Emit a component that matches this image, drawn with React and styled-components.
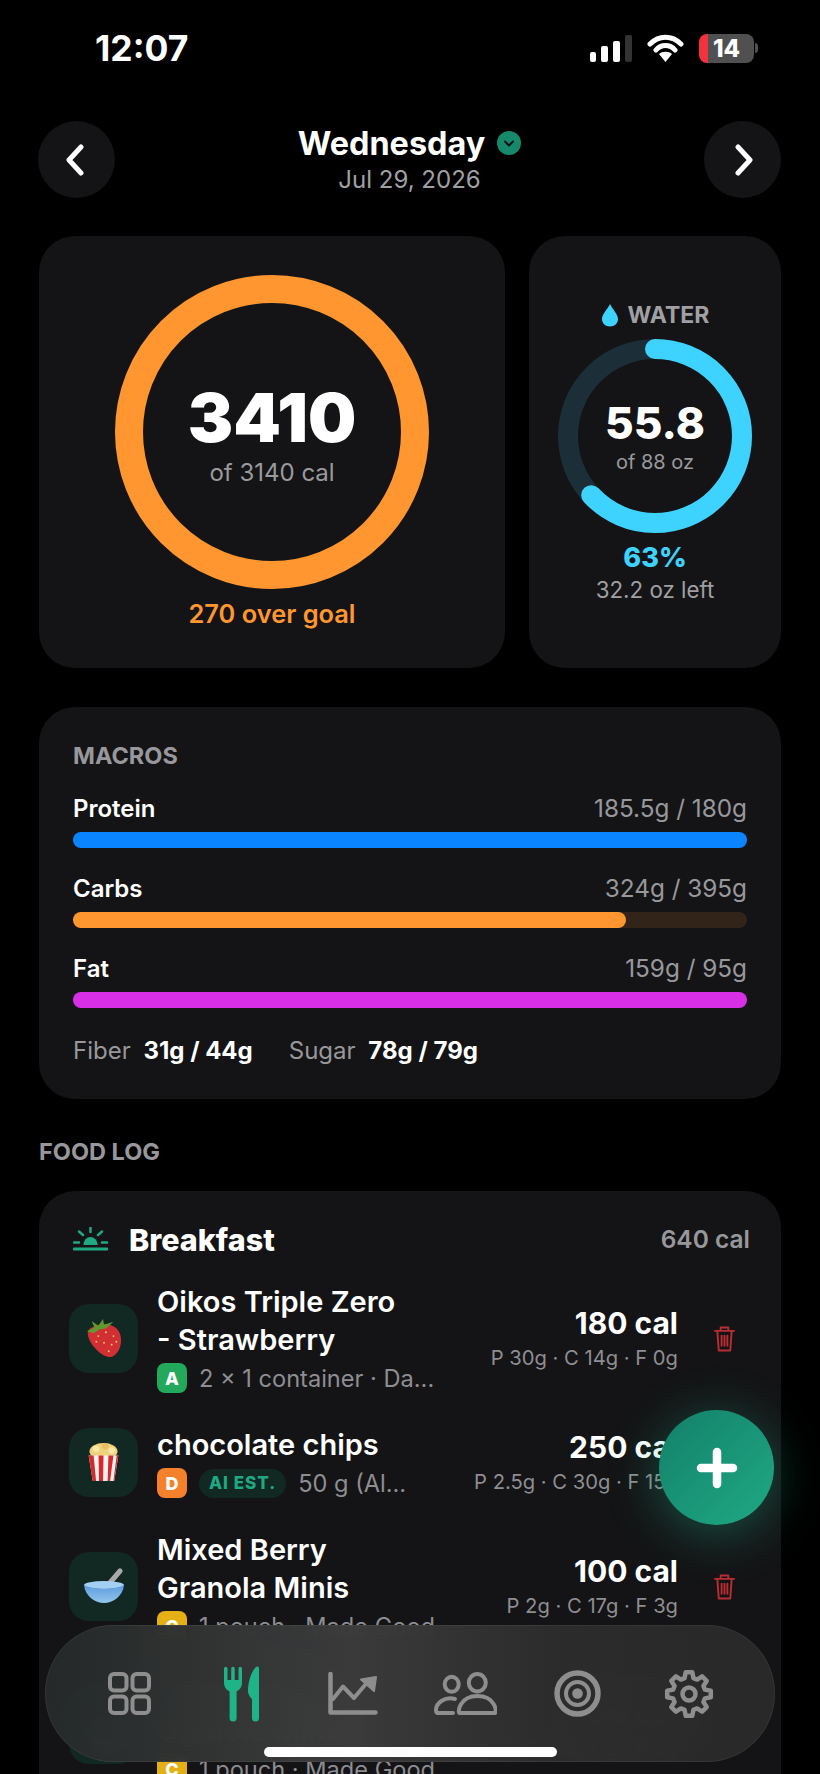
import React from "react";
import styled, { createGlobalStyle } from "styled-components";

const GlobalStyle = createGlobalStyle`
  html, body { margin: 0; padding: 0; background: #000; }
  * { box-sizing: border-box; }
  body { font-family: Inter, "Liberation Sans", sans-serif; color: #fff; }
`;

const macros = [
  { name: "Protein", value: "185.5g / 180g", pct: 100, color: "#0a84ff", track: "#0b2a4a" },
  { name: "Carbs", value: "324g / 395g", pct: 82, color: "#ff9630", track: "#33241a" },
  { name: "Fat", value: "159g / 95g", pct: 100, color: "#d62fe6", track: "#3a1640" },
];

// 8 tooth outline for the settings tab
const gearPoints = Array.from({ length: 8 }, (_, i) => {
  const a = (i * Math.PI) / 4;
  const pt = (off, r) => {
    const x = 25 + r * Math.cos(a + off);
    const y = 25 + r * Math.sin(a + off);
    return `${x.toFixed(1)},${y.toFixed(1)}`;
  };
  return [pt(-0.27, 16.5), pt(-0.15, 22), pt(0.15, 22), pt(0.27, 16.5)].join(" ");
}).join(" ");

const Strawberry = () => (
  <svg width="38" height="42" viewBox="0 0 40 44">
    <path d="M10 10 C20 4 38 8 38 24 C38 36 30 43 25 42 C16 41 2 26 3 16 C4 12 7 11 10 10Z" fill="#d12f33" />
    <path d="M2 15 L10 11 L7 4 L14 9 L19 2 L20 8 L30 5 L22 12 L15 13 L9 17Z" fill="#5f9a2e" />
    {[[14, 20], [22, 16], [30, 20], [20, 27], [28, 29], [25, 36], [12, 26], [33, 26]].map(([x, y], i) => (
      <circle key={i} cx={x} cy={y} r="1" fill="#f4c95d" />
    ))}
  </svg>
);

const Popcorn = () => (
  <svg width="33" height="42" viewBox="0 0 40 50">
    <ellipse cx="20" cy="12" rx="17" ry="10" fill="#f1d27c" />
    <circle cx="11" cy="9" r="4" fill="#fbe6a6" />
    <circle cx="22" cy="6" r="4" fill="#e7c062" />
    <circle cx="30" cy="11" r="4" fill="#fbe6a6" />
    <path d="M2 17 H38 L33 48 H7Z" fill="#f6f1ee" />
    <path d="M2 17 H8 L11 48 H7Z M14 17 H20 L19.5 48 H14.5Z M26 17 H32 L28 48 H25Z M36 17 H38 L33 48 H32Z" fill="#d42a2e" />
  </svg>
);

const Bowl = () => (
  <svg width="42" height="36" viewBox="0 0 42 36">
    <defs>
      <linearGradient id="bowlBody" x1="0" y1="0" x2="0" y2="1">
        <stop offset="0" stopColor="#5d9bdc" />
        <stop offset="1" stopColor="#93c6ee" />
      </linearGradient>
    </defs>
    <path d="M25 17 L37 3" stroke="#a9a9ab" strokeWidth="5" strokeLinecap="round" />
    <ellipse cx="21" cy="17" rx="20" ry="4" fill="#a3d0f2" />
    <path d="M1 17 C2 28 12 35 21 35 C30 35 40 28 41 17 C32 22 10 22 1 17Z" fill="url(#bowlBody)" />
  </svg>
);

const foods = [
  {
    name: "Oikos Triple Zero - Strawberry",
    art: <Strawberry />,
    grade: "A",
    gradeColor: "#22a95c",
    detail: "2 × 1 container · Da...",
    cal: "180 cal",
    split: "P 30g · C 14g · F 0g",
  },
  {
    name: "chocolate chips",
    art: <Popcorn />,
    grade: "D",
    gradeColor: "#f5822a",
    ai: true,
    detail: "50 g (Al...",
    cal: "250 cal",
    split: "P 2.5g · C 30g · F 15g",
  },
  {
    name: "Mixed Berry Granola Minis",
    art: <Bowl />,
    grade: "C",
    gradeColor: "#e5b015",
    detail: "1 pouch · Made Good",
    cal: "100 cal",
    split: "P 2g · C 17g · F 3g",
  },
  {
    name: "Mixed Berry Granola Minis",
    art: <Bowl />,
    grade: "C",
    gradeColor: "#e5b015",
    detail: "1 pouch · Made Good",
    cal: "100 cal",
    split: "P 2g · C 17g · F 3g",
  },
];

const App = () => {
  const waterR = 87;
  const waterLen = 2 * Math.PI * waterR;

  return (
    <Screen>
      <GlobalStyle />
      <StatusBar>
        <Clock>12:07</Clock>
        <StatusIcons>
          <svg width="42" height="27" viewBox="0 0 42 27">
            <rect x="0" y="17" width="6" height="10" rx="2" fill="#fff" />
            <rect x="11" y="11" width="7" height="16" rx="2" fill="#fff" />
            <rect x="23" y="6" width="7" height="21" rx="2" fill="#fff" />
            <rect x="35" y="0" width="7" height="27" rx="2" fill="#333" />
          </svg>
          <svg width="37" height="28" viewBox="0 0 37 28">
            <path d="M3 10 C12 1 25 1 34 10 M9 16 C14 10 23 10 28 16" fill="none" stroke="#fff" strokeWidth="5" strokeLinecap="round" />
            <path d="M12 20 C15 17 22 17 25 20 L18.5 28Z" fill="#fff" />
          </svg>
          <Battery>
            <BatteryLevel>14</BatteryLevel>
            <BatteryNub />
          </Battery>
        </StatusIcons>
      </StatusBar>

      <DayHeader>
        <RoundButton>
          <svg width="24" height="32" viewBox="0 0 24 32">
            <path d="M16 3 L4 16 L16 29" fill="none" stroke="#fff" strokeWidth="5" strokeLinecap="round" strokeLinejoin="round" />
          </svg>
        </RoundButton>
        <DayTitle>
          <DayName>
            Wednesday
            <svg width="24" height="24" viewBox="0 0 24 24">
              <circle cx="12" cy="12" r="12" fill="#17896b" />
              <path d="M8 10.5 L12 14.5 L16 10.5" fill="none" stroke="#0b1512" strokeWidth="2" strokeLinecap="round" strokeLinejoin="round" />
            </svg>
          </DayName>
          <DayDate>Jul 29, 2026</DayDate>
        </DayTitle>
        <RoundButton>
          <svg width="24" height="32" viewBox="0 0 24 32">
            <path d="M8 3 L20 16 L8 29" fill="none" stroke="#fff" strokeWidth="5" strokeLinecap="round" strokeLinejoin="round" />
          </svg>
        </RoundButton>
      </DayHeader>

      <TopCards>
        <CalorieCard>
          <RingWrap $size={314}>
            <svg width="314" height="314" viewBox="0 0 314 314">
              <circle cx="157" cy="157" r="143" fill="none" stroke="#ff9630" strokeWidth="28" />
            </svg>
            <RingCenter>
              <BigNumber>3410</BigNumber>
              <RingSub>of 3140 cal</RingSub>
            </RingCenter>
          </RingWrap>
          <OverGoal>270 over goal</OverGoal>
        </CalorieCard>

        <WaterCard>
          <WaterLabel>
            <svg width="18" height="24" viewBox="0 0 18 24">
              <path d="M9 1 C12 7 17 11 17 16 C17 20.5 13.5 23.5 9 23.5 C4.5 23.5 1 20.5 1 16 C1 11 6 7 9 1Z" fill="#3ed2ff" />
            </svg>
            WATER
          </WaterLabel>
          <RingWrap $size={194}>
            <svg width="194" height="194" viewBox="0 0 194 194">
              <circle cx="97" cy="97" r={waterR} fill="none" stroke="#1c2f38" strokeWidth="20" />
              <circle
                cx="97"
                cy="97"
                r={waterR}
                fill="none"
                stroke="#3ed2ff"
                strokeWidth="20"
                strokeLinecap="round"
                strokeDasharray={`${waterLen * 0.63} ${waterLen}`}
                transform="rotate(-90 97 97)"
              />
            </svg>
            <RingCenter>
              <WaterNumber>55.8</WaterNumber>
              <WaterOf>of 88 oz</WaterOf>
            </RingCenter>
          </RingWrap>
          <WaterPct>63%</WaterPct>
          <WaterLeft>32.2 oz left</WaterLeft>
        </WaterCard>
      </TopCards>

      <MacrosCard>
        <CardLabel>MACROS</CardLabel>
        {macros.map((m) => (
          <MacroRow key={m.name}>
            <MacroHead>
              <MacroName>{m.name}</MacroName>
              <MacroValue>{m.value}</MacroValue>
            </MacroHead>
            <Track $bg={m.track}>
              <Fill $color={m.color} style={{ width: `${m.pct}%` }} />
            </Track>
          </MacroRow>
        ))}
        <Extras>
          <span>Fiber <b>31g / 44g</b></span>
          <span>Sugar <b>78g / 79g</b></span>
        </Extras>
      </MacrosCard>

      <SectionLabel>FOOD LOG</SectionLabel>

      <LogCard>
        <MealHead>
          <MealTitle>
            <svg width="36" height="24" viewBox="0 0 36 24">
              <path d="M10.5 18 a7 8 0 0 1 14 0Z" fill="#1fa983" />
              <rect x="0" y="20.5" width="35" height="3" rx="1" fill="#1fa983" />
              <path d="M17.5 0.5 V5 M6 4.5 L10 8 M29 4.5 L25 8 M1 15.5 H6 M29 15.5 H34" stroke="#1fa983" strokeWidth="2.5" strokeLinecap="round" />
            </svg>
            Breakfast
          </MealTitle>
          <MealCal>640 cal</MealCal>
        </MealHead>
        {foods.map((f, i) => (
          <FoodRow key={i}>
            <FoodArt>{f.art}</FoodArt>
            <FoodText>
              <FoodName>{f.name}</FoodName>
              <FoodMeta>
                <Grade $color={f.gradeColor}>{f.grade}</Grade>
                {f.ai && <AiPill>AI EST.</AiPill>}
                <FoodDetail>{f.detail}</FoodDetail>
              </FoodMeta>
            </FoodText>
            <FoodNumbers>
              <FoodCal>{f.cal}</FoodCal>
              <FoodSplit>{f.split}</FoodSplit>
            </FoodNumbers>
            <TrashSlot>
              <svg width="23" height="27" viewBox="0 0 24 28" fill="none" stroke="#b92d33" strokeWidth="2" strokeLinecap="round" strokeLinejoin="round">
                <path d="M2 6 H22 M8 6 V2.5 H16 V6 M4.5 6 L6 26.5 H18 L19.5 6 M9 11 V21.5 M12 11 V21.5 M15 11 V21.5" />
              </svg>
            </TrashSlot>
          </FoodRow>
        ))}
      </LogCard>

      <Fab>
        <svg width="42" height="42" viewBox="0 0 42 42">
          <path d="M21 5 V37 M5 21 H37" stroke="#fff" strokeWidth="8.5" strokeLinecap="round" />
        </svg>
      </Fab>

      <TabBar>
        <TabIcon>
          <svg width="43" height="43" viewBox="0 0 43 43" fill="none" stroke="#8e8e8e" strokeWidth="4">
            <rect x="2" y="2" width="16.5" height="16.5" rx="4" />
            <rect x="24.5" y="2" width="16.5" height="16.5" rx="4" />
            <rect x="2" y="24.5" width="16.5" height="16.5" rx="4" />
            <rect x="24.5" y="24.5" width="16.5" height="16.5" rx="4" />
          </svg>
        </TabIcon>
        <TabIcon>
          <svg width="35" height="56" viewBox="0 0 35 56" fill="#1fb488">
            <path d="M0 2.5 a1.75 1.75 0 0 1 3.5 0 V14 H7.2 V2.5 a1.75 1.75 0 0 1 3.5 0 V14 H14.5 V2.5 a1.75 1.75 0 0 1 3.5 0 V17 C18 21 15.5 24 12.6 25.5 V52 a3.5 3.5 0 0 1 -7 0 V25.5 C2.5 24 0 21 0 17Z" />
            <path d="M35 3 C35 0 33 0 31 2 C26 8 24 18 24 25 C24 29 27 32 28 33 V52 a3.5 3.5 0 0 0 7 0Z" />
          </svg>
        </TabIcon>
        <TabIcon>
          <svg width="50" height="43" viewBox="0 0 50 43" fill="none" stroke="#8e8e8e" strokeWidth="4.5" strokeLinecap="round" strokeLinejoin="round">
            <path d="M2.5 2 V40.5 H47.5" />
            <path d="M5 27 L15 14.5 L26 26 L37 13" strokeWidth="4" />
            <path d="M33 7.5 L48 5 L46 19Z" fill="#8e8e8e" strokeWidth="2" />
          </svg>
        </TabIcon>
        <TabIcon>
          <svg width="63" height="43" viewBox="0 0 63 43" fill="none" stroke="#8e8e8e" strokeWidth="4" strokeLinecap="round" strokeLinejoin="round">
            <ellipse cx="17.7" cy="12.3" rx="7" ry="7.5" />
            <ellipse cx="43.3" cy="10.7" rx="8.5" ry="8.7" />
            <path d="M21 27 C11 24 2 31 2 38 C2 40 3 41 4 41 H19" />
            <path d="M25.5 41 C23.5 41 25 24 43.5 24 C62 24 63 41 61 41Z" />
          </svg>
        </TabIcon>
        <TabIcon>
          <svg width="47" height="47" viewBox="0 0 47 47" fill="none" stroke="#8e8e8e">
            <circle cx="23.5" cy="23.5" r="20.5" strokeWidth="5.5" />
            <circle cx="23.5" cy="23.5" r="11.5" strokeWidth="4" />
            <circle cx="23.5" cy="23.5" r="5.3" fill="#8e8e8e" stroke="none" />
          </svg>
        </TabIcon>
        <TabIcon>
          <svg width="50" height="50" viewBox="0 0 50 50" fill="none" stroke="#8e8e8e" strokeWidth="4.5" strokeLinejoin="round">
            <polygon points={gearPoints} />
            <circle cx="25" cy="25" r="6.5" />
          </svg>
        </TabIcon>
        <HomeBar />
      </TabBar>
    </Screen>
  );
};

const Screen = styled.div`
  position: relative;
  width: 820px;
  height: 1774px;
  overflow: hidden;
  background: #000;
`;

const StatusBar = styled.div`
  display: flex;
  justify-content: space-between;
  align-items: center;
  height: 34px;
  margin-top: 31px;
  padding: 0 63px 0 95px;
`;

const Clock = styled.div`
  font-size: 35.5px;
  font-weight: 700;
`;

const StatusIcons = styled.div`
  display: flex;
  align-items: center;
  gap: 15px;
`;

const Battery = styled.div`
  position: relative;
  display: flex;
  align-items: center;
  margin-right: 3px;
`;

const BatteryLevel = styled.div`
  width: 55px;
  height: 29px;
  border-radius: 8px;
  background: linear-gradient(90deg, #f2333d 0 9px, #505050 9px);
  text-align: center;
  font-size: 24px;
  font-weight: 800;
  line-height: 29px;
`;

const BatteryNub = styled.div`
  position: absolute;
  right: -4px;
  width: 3px;
  height: 10px;
  border-radius: 0 3px 3px 0;
  background: #505050;
`;

const DayHeader = styled.div`
  display: flex;
  justify-content: space-between;
  margin-top: 56px;
  padding: 0 39px 0 38px;
`;

const RoundButton = styled.div`
  display: flex;
  align-items: center;
  justify-content: center;
  width: 77px;
  height: 77px;
  border-radius: 50%;
  background: #141416;
`;

const DayTitle = styled.div`
  display: flex;
  flex-direction: column;
  align-items: center;
`;

const DayName = styled.div`
  display: flex;
  align-items: center;
  gap: 12px;
  height: 44px;
  font-size: 32.4px;
  font-weight: 700;
`;

const DayDate = styled.div`
  font-size: 24px;
  color: #a0a0a4;
`;

const TopCards = styled.div`
  display: flex;
  gap: 24px;
  margin: 38px 39px 0;
`;

const Card = styled.div`
  background: #141416;
  border-radius: 36px;
`;

const CalorieCard = styled(Card)`
  display: flex;
  flex-direction: column;
  align-items: center;
  width: 466px;
  height: 432px;
  padding-top: 39px;
`;

const WaterCard = styled(Card)`
  display: flex;
  flex-direction: column;
  align-items: center;
  flex: 1;
  height: 432px;
  padding-top: 65px;
`;

const RingWrap = styled.div`
  position: relative;
  width: ${(p) => p.$size}px;
  height: ${(p) => p.$size}px;
`;

const RingCenter = styled.div`
  position: absolute;
  inset: 0;
  display: flex;
  flex-direction: column;
  align-items: center;
  justify-content: center;
`;

const BigNumber = styled.div`
  font-size: 68px;
  font-weight: 900;
  line-height: 70px;
  margin-top: 4px;
`;

const RingSub = styled.div`
  font-size: 24px;
  color: #9a9a9e;
  margin-top: 6px;
`;

const OverGoal = styled.div`
  margin-top: 9px;
  font-size: 25.4px;
  font-weight: 600;
  color: #ff9630;
`;

const WaterLabel = styled.div`
  display: flex;
  align-items: center;
  gap: 9px;
  height: 28px;
  margin-bottom: 10px;
  font-size: 23px;
  font-weight: 700;
  color: #a0a0a4;
`;

const WaterNumber = styled.div`
  font-size: 44px;
  font-weight: 800;
  line-height: 48px;
  margin-top: 1px;
`;

const WaterOf = styled.div`
  font-size: 20px;
  color: #9a9a9e;
  margin-top: 3px;
`;

const WaterPct = styled.div`
  margin-top: 8px;
  font-size: 27px;
  font-weight: 800;
  color: #3ed2ff;
`;

const WaterLeft = styled.div`
  margin-top: 2px;
  font-size: 22.3px;
  color: #a0a0a4;
`;

const MacrosCard = styled(Card)`
  margin: 39px 39px 0;
  height: 392px;
  padding: 34px 34px;
`;

const CardLabel = styled.div`
  font-size: 23.5px;
  font-weight: 700;
  color: #98989c;
  height: 27px;
  margin-bottom: 24px;
`;

const MacroRow = styled.div`
  margin-bottom: 24px;
`;

const MacroHead = styled.div`
  display: flex;
  justify-content: space-between;
  align-items: center;
  height: 32px;
  margin-bottom: 8px;
`;

const MacroName = styled.div`
  font-size: 24px;
  font-weight: 600;
`;

const MacroValue = styled.div`
  font-size: 24.3px;
  color: #98989c;
`;

const Track = styled.div`
  height: 16px;
  border-radius: 8px;
  background: ${(p) => p.$bg};
`;

const Fill = styled.div`
  height: 100%;
  border-radius: 8px;
  background: ${(p) => p.$color};
`;

const Extras = styled.div`
  display: flex;
  gap: 36px;
  margin-top: 28px;
  font-size: 24px;
  color: #98989c;
  b {
    margin-left: 6px;
    color: #fff;
    font-weight: 700;
  }
`;

const SectionLabel = styled.div`
  margin: 38px 39px 0;
  height: 27px;
  font-size: 23.5px;
  font-weight: 700;
  color: #98989c;
`;

const LogCard = styled(Card)`
  margin: 27px 39px 0;
  padding: 29px 33px 0 30px;
  height: 700px;
`;

const MealHead = styled.div`
  display: flex;
  justify-content: space-between;
  align-items: center;
  height: 38px;
  margin-bottom: 25px;
`;

const MealTitle = styled.div`
  display: flex;
  align-items: center;
  gap: 20px;
  padding-left: 4px;
  font-size: 30.5px;
  font-weight: 800;
`;

const MealCal = styled.div`
  margin-right: -2px;
  font-size: 24.5px;
  font-weight: 600;
  color: #98989c;
`;

const FoodRow = styled.div`
  display: flex;
  align-items: center;
  margin-bottom: 33px;
`;

const FoodArt = styled.div`
  display: flex;
  flex: none;
  align-items: center;
  justify-content: center;
  width: 69px;
  height: 69px;
  border-radius: 20px;
  background: #122823;
`;

const FoodText = styled.div`
  flex: 1;
  min-width: 0;
  margin-left: 19px;
`;

const FoodName = styled.div`
  max-width: 250px;
  font-size: 29px;
  font-weight: 600;
  line-height: 38px;
`;

const FoodMeta = styled.div`
  display: flex;
  align-items: center;
  gap: 12px;
  margin-top: 4px;
  white-space: nowrap;
`;

const Grade = styled.div`
  display: flex;
  align-items: center;
  justify-content: center;
  width: 30px;
  height: 30px;
  border-radius: 8px;
  background: ${(p) => p.$color};
  font-size: 18px;
  font-weight: 800;
`;

const AiPill = styled.div`
  padding: 0 10px;
  height: 29px;
  line-height: 29px;
  border-radius: 15px;
  background: #122823;
  color: #1fa983;
  font-size: 17px;
  font-weight: 800;
  letter-spacing: 1px;
`;

const FoodDetail = styled.div`
  font-size: 23.6px;
  color: #8e8e92;
`;

const FoodNumbers = styled.div`
  flex: none;
  display: flex;
  flex-direction: column;
  align-items: flex-end;
`;

const FoodCal = styled.div`
  font-size: 30px;
  font-weight: 700;
  line-height: 40px;
`;

const FoodSplit = styled.div`
  font-size: 20.2px;
  color: #8e8e92;
  line-height: 30px;
`;

const TrashSlot = styled.div`
  display: flex;
  flex: none;
  justify-content: center;
  width: 47px;
  margin-left: 23px;
`;

const Fab = styled.div`
  position: absolute;
  left: 659px;
  top: 1410px;
  display: flex;
  align-items: center;
  justify-content: center;
  width: 115px;
  height: 115px;
  border-radius: 50%;
  background: linear-gradient(135deg, #13806a, #1fa983);
  box-shadow: 0 8px 50px rgba(31, 169, 131, 0.42);
`;

const TabBar = styled.div`
  position: absolute;
  left: 45px;
  top: 1625px;
  display: flex;
  justify-content: space-between;
  align-items: center;
  width: 730px;
  height: 137px;
  padding: 0 52px 0 50px;
  border-radius: 68px;
  background: linear-gradient(90deg, rgba(38, 42, 42, 0.97), rgba(60, 60, 60, 0.97) 42%, rgba(46, 45, 45, 0.97) 70%, rgba(42, 42, 42, 0.97));
  backdrop-filter: blur(24px);
  border: 1px solid rgba(255, 255, 255, 0.06);
`;

const TabIcon = styled.div`
  display: flex;
  align-items: center;
  justify-content: center;
  width: 66px;
  height: 60px;
`;

const HomeBar = styled.div`
  position: absolute;
  left: 218px;
  bottom: 4px;
  width: 293px;
  height: 10px;
  border-radius: 5px;
  background: #fff;
`;

export default App;
